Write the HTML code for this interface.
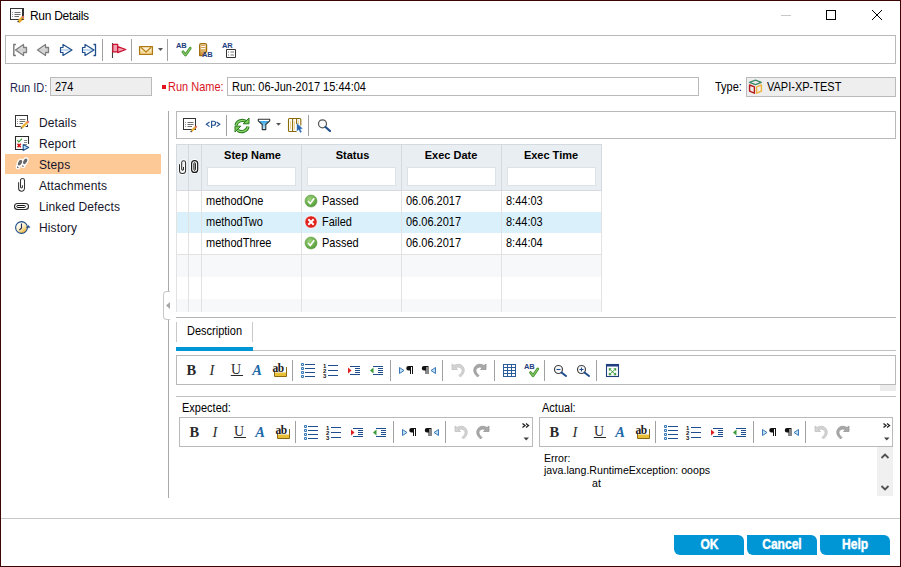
<!DOCTYPE html>
<html><head><meta charset="utf-8">
<style>
*{box-sizing:border-box;margin:0;padding:0}
html,body{width:901px;height:567px;overflow:hidden;background:#fff}
body{position:relative;font-family:"Liberation Sans",sans-serif;font-size:11px;color:#000}
.a{position:absolute}
.t{position:absolute;white-space:pre;line-height:11px;font-size:11px;transform:scaleY(1.12);transform-origin:0 9px}
.t12{position:absolute;white-space:pre;line-height:12px;font-size:12px;letter-spacing:0.12px}
.box{position:absolute;border:1px solid #b9b9b9}
.sep{position:absolute;width:1px;background:#a0a0a0}
svg{position:absolute;overflow:visible}
.btn{width:70px;height:20px;background:#0096d6;color:#fff;font-weight:bold;font-size:14px;line-height:19px;text-align:center;border-radius:0 6px 0 6px;-webkit-text-stroke:0.4px #fff}
.btn span{display:inline-block;transform:scaleX(0.86)}
</style></head><body>
<!-- window border -->
<div class="a" style="left:0;top:0;width:901px;height:567px;border:1px solid #3c0505"></div>

<!-- title bar -->
<svg style="left:10px;top:8px" width="15" height="15" viewBox="0 0 15 15">
  <rect x="0.5" y="0.5" width="13" height="11" fill="#fff" stroke="#333"/>
  <rect x="2" y="3" width="1" height="1" fill="#555"/><rect x="4" y="3" width="7" height="1" fill="#555"/>
  <rect x="2" y="5" width="1" height="1" fill="#555"/><rect x="4" y="5" width="7" height="1" fill="#555"/>
  <rect x="2" y="7" width="1" height="1" fill="#555"/><rect x="4" y="7" width="5" height="1" fill="#555"/>
  <path d="M8 14 L13 9 L14.5 10.5 L9.5 15 Z" fill="#e8a420"/>
</svg>
<div class="t12" style="left:30px;top:10px;letter-spacing:-0.3px;color:#000">Run Details</div>
<div class="a" style="left:781px;top:15px;width:10px;height:1px;background:#c8c8c8"></div>
<div class="a" style="left:826px;top:10px;width:10px;height:10px;border:1px solid #000"></div>
<svg style="left:872px;top:10px" width="10" height="10" viewBox="0 0 10 10"><path d="M0 0 L10 10 M10 0 L0 10" stroke="#000" stroke-width="1"/></svg>

<!-- main toolbar -->
<div class="box" style="left:5px;top:35px;width:891px;height:29px"></div>
<div class="sep" style="left:102px;top:39px;height:22px"></div>
<div class="sep" style="left:131px;top:39px;height:22px"></div>
<div class="sep" style="left:167px;top:39px;height:22px"></div>

<!-- Run ID row -->
<div class="t" style="left:10px;top:83px;color:#25254f">Run ID:</div>
<div class="a" style="left:50px;top:77px;width:102px;height:19px;background:#eeeeee;border:1px solid #bababa"></div>
<div class="t" style="left:55px;top:82px">274</div>
<div class="a" style="left:162px;top:85px;width:4px;height:4px;background:#e0141e"></div>
<div class="t" style="left:168px;top:82px;color:#d7141e">Run Name:</div>
<div class="a" style="left:227px;top:77px;width:472px;height:19px;background:#fff;border:1px solid #bababa"></div>
<div class="t" style="left:232px;top:82px">Run: 06-Jun-2017 15:44:04</div>
<div class="t" style="left:715px;top:82px;color:#000">Type:</div>
<div class="a" style="left:746px;top:77px;width:150px;height:20px;background:#eeeeee;border:1px solid #bababa"></div>
<div class="t" style="left:767px;top:82px">VAPI-XP-TEST</div>

<!-- left nav -->
<div class="a" style="left:5px;top:154px;width:156px;height:20px;background:#fdc997"></div>
<div class="t12" style="left:39px;top:117px;color:#15152a">Details</div>
<div class="t12" style="left:39px;top:138px;color:#15152a">Report</div>
<div class="t12" style="left:39px;top:159px;color:#15152a">Steps</div>
<div class="t12" style="left:39px;top:180px;color:#15152a">Attachments</div>
<div class="t12" style="left:39px;top:201px;color:#15152a">Linked Defects</div>
<div class="t12" style="left:39px;top:222px;color:#15152a">History</div>

<!-- vertical splitter -->
<div class="a" style="left:168px;top:111px;width:1px;height:387px;background:#a8a8a8"></div>

<!-- inner toolbar -->
<div class="box" style="left:176px;top:111px;width:720px;height:28px"></div>
<div class="sep" style="left:226px;top:115px;height:21px"></div>
<div class="sep" style="left:308px;top:115px;height:21px"></div>


<!-- grid -->
<div class="a" style="left:176px;top:144px;width:426px;height:168px;background:#fff;border-left:1px solid #e2e2e2;border-top:1px solid #d4dae0;border-right:1px solid #e2e2e2"></div>
<div class="a" style="left:176px;top:144px;width:1px;height:47px;background:#d4dae0"></div>
<div class="a" style="left:601px;top:144px;width:1px;height:47px;background:#d4dae0"></div>
<div class="a" style="left:177px;top:145px;width:424px;height:45px;background:#e9eef2"></div>
<div class="a" style="left:176px;top:190px;width:426px;height:1px;background:#d4dae0"></div>
<div class="a" style="left:177px;top:212px;width:424px;height:21px;background:#daf1fc"></div>
<div class="a" style="left:176px;top:254px;width:426px;height:1px;background:#e2e2e2"></div>
<div class="a" style="left:177px;top:255px;width:424px;height:22px;background:#f6f8fa"></div>
<div class="a" style="left:177px;top:299px;width:424px;height:13px;background:#f6f8fa"></div>
<!-- col lines header -->
<div class="a" style="left:188px;top:145px;width:1px;height:45px;background:#d4dae0"></div>
<div class="a" style="left:201px;top:145px;width:1px;height:45px;background:#d4dae0"></div>
<div class="a" style="left:301px;top:145px;width:1px;height:45px;background:#d4dae0"></div>
<div class="a" style="left:401px;top:145px;width:1px;height:45px;background:#d4dae0"></div>
<div class="a" style="left:501px;top:145px;width:1px;height:45px;background:#d4dae0"></div>
<!-- col lines body -->
<div class="a" style="left:188px;top:191px;width:1px;height:121px;background:#e2e2e2"></div>
<div class="a" style="left:201px;top:191px;width:1px;height:121px;background:#e2e2e2"></div>
<div class="a" style="left:301px;top:191px;width:1px;height:121px;background:#e2e2e2"></div>
<div class="a" style="left:401px;top:191px;width:1px;height:121px;background:#e2e2e2"></div>
<div class="a" style="left:501px;top:191px;width:1px;height:121px;background:#e2e2e2"></div>
<!-- filter boxes -->
<div class="a" style="left:207px;top:167px;width:89px;height:19px;background:#fff;border:1px solid #dde2e7"></div>
<div class="a" style="left:307px;top:167px;width:89px;height:19px;background:#fff;border:1px solid #dde2e7"></div>
<div class="a" style="left:407px;top:167px;width:89px;height:19px;background:#fff;border:1px solid #dde2e7"></div>
<div class="a" style="left:507px;top:167px;width:89px;height:19px;background:#fff;border:1px solid #dde2e7"></div>
<!-- header text -->
<div class="t" style="left:202.5px;width:100px;text-align:center;top:150px;font-weight:bold;transform:none">Step Name</div>
<div class="t" style="left:302.5px;width:100px;text-align:center;top:150px;font-weight:bold;transform:none">Status</div>
<div class="t" style="left:401px;width:100px;text-align:center;top:150px;font-weight:bold;transform:none">Exec Date</div>
<div class="t" style="left:501px;width:100px;text-align:center;top:150px;font-weight:bold;transform:none">Exec Time</div>
<!-- rows -->
<div class="t" style="left:206px;top:196px">methodOne</div>
<div class="t" style="left:322px;top:196px">Passed</div>
<div class="t" style="left:406px;top:196px">06.06.2017</div>
<div class="t" style="left:506px;top:196px">8:44:03</div>
<div class="t" style="left:206px;top:217px">methodTwo</div>
<div class="t" style="left:322px;top:217px">Failed</div>
<div class="t" style="left:406px;top:217px">06.06.2017</div>
<div class="t" style="left:506px;top:217px">8:44:03</div>
<div class="t" style="left:206px;top:238px">methodThree</div>
<div class="t" style="left:322px;top:238px">Passed</div>
<div class="t" style="left:406px;top:238px">06.06.2017</div>
<div class="t" style="left:506px;top:238px">8:44:04</div>



<!-- horizontal splitter -->
<div class="a" style="left:176px;top:317px;width:720px;height:1px;background:#b4b4b4"></div>
<!-- collapse handle -->
<div class="a" style="left:163px;top:291px;width:7px;height:29px;border:1px solid #c8c8c8;border-right:none;border-radius:4px 0 0 4px;background:#fff"></div>
<svg style="left:166px;top:302px" width="5" height="7"><path d="M0 3.5 L4 0 L4 7 Z" fill="#a8a8a8"/></svg>
<!-- description tab -->
<div class="a" style="left:176px;top:322px;width:1px;height:20px;background:#c8c8c8"></div>
<div class="a" style="left:252px;top:322px;width:1px;height:20px;background:#c8c8c8"></div>
<div class="t" style="left:187px;top:326px">Description</div>
<div class="a" style="left:176px;top:347px;width:77px;height:4px;background:#0096d6"></div>
<div class="a" style="left:253px;top:350px;width:643px;height:1px;background:#c0c0c0"></div>
<!-- description toolbar -->
<div class="box" style="left:176px;top:355px;width:720px;height:30px"></div>
<div class="a" style="left:880px;top:385px;width:16px;height:6px;background:#ececec"></div>
<div class="a" style="left:176px;top:396px;width:720px;height:1px;background:#c0c0c0"></div>
<div class="sep" style="left:292px;top:360px;height:21px"></div>
<div class="sep" style="left:390px;top:360px;height:21px"></div>
<div class="sep" style="left:442px;top:360px;height:21px"></div>
<div class="sep" style="left:494px;top:360px;height:21px"></div>
<div class="sep" style="left:544px;top:360px;height:21px"></div>
<div class="sep" style="left:596px;top:360px;height:21px"></div>
<!-- expected / actual -->
<div class="t" style="left:182px;top:403px">Expected:</div>
<div class="t" style="left:542px;top:403px">Actual:</div>
<div class="box" style="left:179px;top:417px;width:354px;height:30px"></div>
<div class="box" style="left:539px;top:417px;width:354px;height:30px"></div>
<div class="sep" style="left:295px;top:421px;height:22px"></div>
<div class="sep" style="left:393px;top:421px;height:22px"></div>
<div class="sep" style="left:445px;top:421px;height:22px"></div>
<div class="sep" style="left:655px;top:421px;height:22px"></div>
<div class="sep" style="left:753px;top:421px;height:22px"></div>
<div class="sep" style="left:805px;top:421px;height:22px"></div>
<div class="t" style="left:544px;top:453px;font-size:10.6px;transform:none">Error:</div>
<div class="t" style="left:544px;top:465px;font-size:10.6px;transform:none">java.lang.RuntimeException: ooops</div>
<div class="t" style="left:592px;top:478px;font-size:10.6px;transform:none">at</div>
<div class="a" style="left:877px;top:447px;width:16px;height:49px;background:#f0f0f0"></div>
<!-- buttons -->
<div class="btn a" style="left:674px;top:535px"><span>OK</span></div>
<div class="btn a" style="left:747px;top:535px"><span>Cancel</span></div>
<div class="btn a" style="left:820px;top:535px"><span>Help</span></div>
<!-- bottom -->
<div class="a" style="left:1px;top:518px;width:899px;height:1px;background:#c8c8c8"></div>

<!-- ICONS overlay -->
<svg style="left:0;top:0" width="901" height="567" viewBox="0 0 901 567">
<defs>
<linearGradient id="gg" x1="0" y1="0" x2="0" y2="1"><stop offset="0" stop-color="#f2f2f2"/><stop offset="0.5" stop-color="#cfcfcf"/><stop offset="1" stop-color="#ededed"/></linearGradient>
<linearGradient id="bg" x1="0" y1="0" x2="0" y2="1"><stop offset="0" stop-color="#ffffff"/><stop offset="0.35" stop-color="#ffffff"/><stop offset="0.5" stop-color="#a8cce8"/><stop offset="0.65" stop-color="#ffffff"/><stop offset="1" stop-color="#ffffff"/></linearGradient>
<linearGradient id="fun" x1="0" y1="0" x2="0" y2="1"><stop offset="0" stop-color="#ffffff"/><stop offset="0.16" stop-color="#ffffff"/><stop offset="0.2" stop-color="#3aa8e8"/><stop offset="1" stop-color="#c8ecfc"/></linearGradient>
<radialGradient id="grn" cx="0.4" cy="0.35" r="0.7"><stop offset="0" stop-color="#9fd27a"/><stop offset="1" stop-color="#4f9a35"/></radialGradient>
<g id="docico">
 <rect x="0.5" y="0.5" width="12" height="11" fill="#fff" stroke="#333" stroke-width="1"/>
 <path d="M2 4.5 H3 M2 6.5 H3 M2 8.5 H3" stroke="#999" stroke-width="1"/>
 <path d="M4.5 4.5 H10.5 M4.5 6.5 H10.5 M4.5 8.5 H9" stroke="#707070" stroke-width="1"/>
 <path d="M8.6 13 L12.8 8.8" stroke="#f0b030" stroke-width="2.2" stroke-linecap="butt"/>
 <path d="M12.4 8.4 L13.6 9.6" stroke="#e07070" stroke-width="2.2"/>
 <path d="M7.6 14 L8.6 13" stroke="#444" stroke-width="1.4"/>
</g>
<g id="ed">
 <text x="186.5" y="374.6" font-family="Liberation Serif" font-weight="bold" font-size="14.5" fill="#2a2a2a">B</text>
 <text x="209.5" y="374.6" font-family="Liberation Serif" font-style="italic" font-size="14.5" fill="#2a2a2a">I</text>
 <text x="231" y="373.5" font-family="Liberation Serif" font-size="14" fill="#2a2a2a">U</text>
 <path d="M230.8 375.5 H243" stroke="#2a2a2a" stroke-width="1"/>
 <text x="252.3" y="374.6" font-family="Liberation Serif" font-weight="bold" font-style="italic" font-size="14.5" fill="#1f6aa8">A</text>
 <rect x="275" y="372.5" width="11.5" height="4" fill="#e8c038"/>
 <path d="M274.5 372 V376.5 H286.5 V367" fill="none" stroke="#8a6a10" stroke-width="1"/>
 <text x="272.6" y="371.8" font-family="Liberation Serif" font-weight="bold" font-size="11.5" fill="#1a1a1a" letter-spacing="-0.5">ab</text>
 <!-- bullets -->
 <path d="M301.5 363.5 h2 v2 h-2 Z M301.5 367.5 h2 v2 h-2 Z M301.5 371.5 h2 v2 h-2 Z M301.5 375.5 h2 v2 h-2 Z" fill="#d8e8f8" stroke="#3a78b8" stroke-width="1"/>
 <path d="M305 364.5 H315 M305 368.5 H315 M305 372.5 H315 M305 376.5 H315" stroke="#1f4e8c" stroke-width="1"/>
 <!-- numbers -->
 <text x="323" y="367.5" font-family="Liberation Sans" font-weight="bold" font-size="6" fill="#111">1</text>
 <text x="323" y="372.5" font-family="Liberation Sans" font-weight="bold" font-size="6" fill="#111">2</text>
 <text x="323" y="377.8" font-family="Liberation Sans" font-weight="bold" font-size="6" fill="#111">3</text>
 <path d="M328 365.5 H338 M328 370.5 H338 M328 375.5 H338" stroke="#1f4e8c" stroke-width="1"/>
 <!-- outdent -->
 <path d="M348 367.5 L351.5 370.5 L348 373.5 Z" fill="#e02020"/>
 <path d="M350 366.5 H360 M350 374.5 H360 M355 368.5 H360 M355 370.5 H360 M355 372.5 H360" stroke="#1f4e8c" stroke-width="1"/>
 <!-- indent -->
 <path d="M373.5 367.5 L370 370.5 L373.5 373.5 Z" fill="#3a9a3a"/>
 <path d="M373 366.5 H383 M373 374.5 H383 M378 368.5 H383 M378 370.5 H383 M378 372.5 H383" stroke="#1f4e8c" stroke-width="1"/>
 <!-- ltr / rtl -->
 <path d="M399.5 367.5 L404 370.5 L399.5 373.5 Z" fill="#bfe0f5" stroke="#3a78b8" stroke-width="1"/>
 <path d="M408.5 366 H413 V374 H412 V367 H411 V374 H410 V370.5 H408.5 A2.25 2.25 0 0 1 408.5 366 Z" fill="#111"/>
 <path d="M424 366 H428.5 V374 H427.5 V367 H426.5 V374 H425.5 V370.5 H424 A2.25 2.25 0 0 1 424 366 Z" fill="#111"/>
 <path d="M435.5 367.5 L431 370.5 L435.5 373.5 Z" fill="#bfe0f5" stroke="#3a78b8" stroke-width="1"/>
 <!-- undo / redo -->
 <path d="M452 364 L452 369.5 L457.5 369.5 L455.5 367.5 Q459 366 461.5 368.5 Q463.5 371.5 459 375.5 L460.5 377 Q466.5 371.5 463 366.5 Q459.5 362.5 454 365.5 Z" fill="#d4d4d4" stroke="#c0c0c0" stroke-width="0.8"/>
 <path d="M486 364 L486 369.5 L480.5 369.5 L482.5 367.5 Q479 366 476.5 368.5 Q474.5 371.5 479 375.5 L477.5 377 Q471.5 371.5 475 366.5 Q478.5 362.5 484 365.5 Z" fill="#a8a8a8" stroke="#989898" stroke-width="0.8"/>
</g>
</defs>
<use href="#docico" x="10" y="8"/>
<g id="tb1" stroke-linejoin="round">
 <path d="M15.8 44.5 H13.8 V55.5 H15.8" fill="none" stroke="#6e6e6e" stroke-width="1.3" stroke-linejoin="round"/>
 <path d="M15.5 50 L23.5 44.5 V47.5 H26.5 V52.5 H23.5 V55.5 Z" fill="url(#gg)" stroke="#7e7e7e" stroke-width="1.3"/>
 <path d="M37.5 50 L45.5 44.5 V47.5 H48.5 V52.5 H45.5 V55.5 Z" fill="url(#gg)" stroke="#7e7e7e" stroke-width="1.3"/>
 <path d="M72 50 L63 44.5 V47.5 H60.5 V52.5 H63 V55.5 Z" fill="url(#bg)" stroke="#1f4e8c" stroke-width="1.2"/>
 <path d="M94 50 L85 44.5 V47.5 H82.5 V52.5 H85 V55.5 Z" fill="url(#bg)" stroke="#1f4e8c" stroke-width="1.2"/>
 <path d="M93.5 44.5 H95.5 V55.5 H93.5" fill="none" stroke="#1f4e8c" stroke-width="1.3"/>
 <path d="M112.5 43 V58" stroke="#444" stroke-width="1.1"/>
 <rect x="112.8" y="44.3" width="4.9" height="7.6" fill="#f0a0b0" stroke="#c8102e" stroke-width="1.2"/><path d="M117.7 46.6 L125.8 49.5 L117.7 52.6 Z" fill="#f0a0b0" stroke="#c8102e" stroke-width="1.2" stroke-linejoin="round"/>
 <defs><linearGradient id="env" x1="0" y1="0" x2="0" y2="1"><stop offset="0" stop-color="#fffbea"/><stop offset="1" stop-color="#fbd890"/></linearGradient></defs><rect x="139.6" y="46.6" width="12.8" height="7.8" fill="url(#env)" stroke="#b07810" stroke-width="1.3"/>
 <path d="M140.8 47.3 L146 52 L151.2 47.3" fill="none" stroke="#b88018" stroke-width="1.2"/><path d="M140.5 54 L143.5 50.8 M151.5 54 L148.5 50.8" fill="none" stroke="#e8c070" stroke-width="0.8"/>
 <path d="M158 48 H163 L160.5 51 Z" fill="#555"/>
 <text x="176" y="48.3" font-family="Liberation Sans" font-weight="bold" font-size="7.5" fill="#1f3f7f" letter-spacing="-0.2">AB</text>
 <path d="M183 51.8 L185.5 55 L190.2 48.2" fill="none" stroke="#3f8f2a" stroke-width="2.8" stroke-linecap="round" stroke-linejoin="round"/><path d="M183 51.8 L185.5 55 L190.2 48.2" fill="none" stroke="#8fd070" stroke-width="1.1" stroke-linecap="round"/>
 <defs><linearGradient id="dg" x1="0" y1="0" x2="0" y2="1"><stop offset="0" stop-color="#f8e8c0"/><stop offset="1" stop-color="#c88a28"/></linearGradient></defs><path d="M199.6 45 Q199.6 43.6 201.2 43.6 H205 Q206.6 43.6 206.6 45 V51.5 L202.5 55.6 H199.6 Z" fill="url(#dg)" stroke="#a06c10" stroke-width="1.2"/>
 <path d="M201.2 46.5 H205 M201.2 48.5 H205" stroke="#fff" stroke-width="1"/><path d="M201.2 45.5 H205 M201.2 47.5 H205" stroke="#d89040" stroke-width="0.8"/>
 <text x="202" y="56.8" font-family="Liberation Sans" font-weight="bold" font-size="7.5" fill="#1f3f7f" letter-spacing="-0.2">AB</text>
 <text x="222" y="47.8" font-family="Liberation Sans" font-weight="bold" font-size="7.5" fill="#1f3f7f" letter-spacing="-0.2">AR</text>
 <rect x="226.5" y="49.5" width="9" height="8" fill="#fff" stroke="#333" stroke-width="1"/>
 <path d="M228 52 H229 M230.5 52 H234 M228 55 H229 M230.5 55 H234" stroke="#777" stroke-width="1"/>
</g>
<!-- type cube -->
<g fill="none" stroke-width="1.4" stroke-linejoin="round">
 <path d="M749.5 82.3 L755.5 80.2 L761.3 82.3 L755.5 84.6 Z" stroke="#3d8a6a"/>
 <path d="M749.6 85 L754.4 86.8 V93.2 L749.6 91.2 Z" stroke="#b81a1a"/>
 <path d="M756.6 86.8 L761.4 85 V91.2 L756.6 93.2 Z" stroke="#f0b43c"/>
</g>
<!-- nav icons -->
<g>
 <rect x="15.5" y="115.5" width="12" height="11" fill="#fff" stroke="#333" stroke-width="1"/>
 <path d="M17 119.5 H18 M17 121.5 H18 M17 123.5 H18" stroke="#999" stroke-width="1"/>
 <path d="M19.5 119.5 H25.5 M19.5 121.5 H25.5 M19.5 123.5 H23" stroke="#707070" stroke-width="1"/>
 <path d="M21.8 127.6 L28 121.6" stroke="#fff" stroke-width="3.6"/>
 <path d="M21.8 127.6 L27.6 122" stroke="#f0b030" stroke-width="2.2"/>
 <path d="M27.3 121.3 L28.7 122.7" stroke="#e07070" stroke-width="2.2"/>
 <path d="M20.8 128.6 L21.9 127.5" stroke="#444" stroke-width="1.4"/>
</g>
<g>
 <path d="M23 149.5 H15.5 V136.5 H28.5 V144" fill="#fff" stroke="#2a2a2a" stroke-width="1.1"/>
 <path d="M17.3 140.2 L18.8 141.8 L22 138.6" fill="none" stroke="#3a9a30" stroke-width="1.2"/>
 <path d="M17.5 143.7 L20.8 147.3 M20.8 143.7 L17.5 147.3" stroke="#d01010" stroke-width="1.5"/>
 <path d="M24 140.5 H27 M24 142.5 H27 M24 144.5 H27" stroke="#8a8a8a" stroke-width="1"/>
 <path d="M23.2 144.6 L28.6 147.5 L23.2 150.4 Z" fill="#b8e4fa" stroke="#1f4e8c" stroke-width="1.1" stroke-linejoin="round"/>
</g>
<g fill="#fff" stroke="#fff" stroke-width="2.2">
 <ellipse cx="20" cy="162.7" rx="1.9" ry="3.2" transform="rotate(28 20 162.7)"/>
 <ellipse cx="25.2" cy="161.3" rx="1.9" ry="3.2" transform="rotate(28 25.2 161.3)"/>
 <circle cx="18" cy="167" r="1.3"/><circle cx="23.2" cy="165.7" r="1.3"/>
</g>
<g fill="#666">
 <ellipse cx="20" cy="162.7" rx="1.7" ry="3" transform="rotate(28 20 162.7)"/>
 <ellipse cx="25.2" cy="161.3" rx="1.7" ry="3" transform="rotate(28 25.2 161.3)"/>
 <path d="M17 166 L19 167.8 L17.2 168.3 Z M22.2 164.8 L24.2 166.6 L22.4 167.1 Z"/>
</g>
<path d="M18.6 182.2 V188.3 A2.95 2.95 0 0 0 24.5 188.3 V180.5 A2 2 0 0 0 20.5 180.5 V187 A0.95 0.95 0 0 0 22.4 187 V185.2" fill="none" stroke="#333" stroke-width="1.05"/>
<rect x="14.5" y="203.5" width="14" height="6" rx="3" fill="none" stroke="#2a2a2a" stroke-width="1.1"/>
<rect x="16.8" y="205.5" width="8.6" height="2" rx="1" fill="#fff" stroke="#111" stroke-width="1"/>
<defs><linearGradient id="hy" x1="0.2" y1="0.1" x2="0.8" y2="0.9"><stop offset="0" stop-color="#ffffff"/><stop offset="0.5" stop-color="#fff0c8"/><stop offset="1" stop-color="#eab030"/></linearGradient></defs>
<g>
 <circle cx="21.5" cy="227.5" r="5.9" fill="url(#hy)" stroke="#1f4e8c" stroke-width="1.1"/>
 <path d="M21.5 223.5 V228 L19.3 230.2" fill="none" stroke="#1f3060" stroke-width="1.1"/>
 <path d="M26.6 227.6 L28.4 225.4 L30 227.6 Z" fill="#1f4e8c" stroke="#1f4e8c" stroke-width="0.5"/>
</g>
<!-- inner toolbar -->
<use href="#docico" x="183" y="118"/>
<g fill="none" stroke="#1f4f8f" stroke-width="1.1" stroke-linejoin="miter">
 <path d="M209.5 122 L206.3 124.3 L209.5 126.6"/>
 <path d="M211.6 128 V121.3 H213.6 Q215.6 121.3 215.6 123.3 Q215.6 125.3 213.6 125.3 H211.6"/>
 <path d="M216.6 122 L219.8 124.3 L216.6 126.6"/>
</g>
<g fill="none" stroke-linecap="butt">
 <path d="M236 125.5 A6.3 6 0 0 1 246.3 121.8" stroke="#2a7a20" stroke-width="3.2"/>
 <path d="M236 125.5 A6.3 6 0 0 1 246.3 121.8" stroke="#8ad868" stroke-width="1.3"/>
 <path d="M248 126.5 A6.3 6 0 0 1 237.7 130.2" stroke="#2a7a20" stroke-width="3.2"/>
 <path d="M248 126.5 A6.3 6 0 0 1 237.7 130.2" stroke="#8ad868" stroke-width="1.3"/>
</g>
<path d="M243.2 123.8 L249 123.8 L249 118 Z" fill="#7acc58" stroke="#2a7a20" stroke-width="1" stroke-linejoin="round"/>
<path d="M240.8 126.2 L235 126.2 L235 132 Z" fill="#7acc58" stroke="#2a7a20" stroke-width="1" stroke-linejoin="round"/>
<path d="M258.3 119.2 H269.7 V120.8 L265.8 124.5 V129.6 H262.2 V124.5 L258.3 120.8 Z" fill="url(#fun)" stroke="#333" stroke-width="1.1" stroke-linejoin="round"/>
<path d="M276 123 H281 L278.5 125.8 Z" fill="#555"/>
<path d="M296.6 131.5 H289.5 Q288.5 131.5 288.5 130.5 V119.5 Q288.5 118.5 289.5 118.5 H299.8 Q300.8 118.5 300.8 119.5 V125.5 M292.6 118.5 V131.5 M296.6 118.5 V124" fill="none" stroke="#8a6a08" stroke-width="1.1"/>
<path d="M290.6 121 V129.5 M294.6 121 V129.5 M298.6 120.5 V124" stroke="#e8c050" stroke-width="0.7"/>
<path d="M297 123.5 L297 131 L298.8 129.4 L300.3 132.5 L301.5 131.9 L300.1 128.9 L302.4 128.6 Z" fill="#2a64a8" stroke="#4a88c8" stroke-width="0.5"/>
<circle cx="322.5" cy="123.8" r="4" fill="#fafafa" stroke="#555" stroke-width="1.2"/>
<path d="M325.5 127 L330 131" stroke="#1f4e8c" stroke-width="2.2" stroke-linecap="round"/>
<!-- grid clips -->
<path d="M179.5 164.2 V170.4 A3.05 3.05 0 0 0 185.6 170.4 V162.7 A1.95 1.95 0 0 0 181.7 162.7 V169.2 A0.9 0.9 0 0 0 183.5 169.2 V166.9" fill="none" stroke="#fff" stroke-width="3"/>
<path d="M179.5 164.2 V170.4 A3.05 3.05 0 0 0 185.6 170.4 V162.7 A1.95 1.95 0 0 0 181.7 162.7 V169.2 A0.9 0.9 0 0 0 183.5 169.2 V166.9" fill="none" stroke="#2a2a2a" stroke-width="1.05"/>
<rect x="191.6" y="160.6" width="6.1" height="11.8" rx="3" fill="#fff" stroke="#fff" stroke-width="3"/>
<rect x="191.6" y="160.6" width="6.1" height="11.8" rx="3" fill="none" stroke="#1a1a1a" stroke-width="1.2"/>
<rect x="193.9" y="162.7" width="1.5" height="7.6" rx="0.75" fill="#fff" stroke="#111" stroke-width="1"/>
<!-- status icons -->
<g>
 <circle cx="311" cy="201" r="6" fill="url(#grn)" stroke="#5a9a40" stroke-width="0.6"/>
 <path d="M308 201 L310.3 203.5 L314.2 198.3" fill="none" stroke="#fff" stroke-width="1.6"/>
 <circle cx="311" cy="243" r="6" fill="url(#grn)" stroke="#5a9a40" stroke-width="0.6"/>
 <path d="M308 243 L310.3 245.5 L314.2 240.3" fill="none" stroke="#fff" stroke-width="1.6"/>
 <circle cx="311" cy="222" r="6.3" fill="#e0201c" stroke="#fff" stroke-width="1"/>
 <path d="M308.3 219.3 L313.7 224.7 M313.7 219.3 L308.3 224.7" stroke="#fff" stroke-width="2"/>
</g>
<!-- editor toolbars -->
<use href="#ed"/>
<use href="#ed" x="3" y="62"/>
<use href="#ed" x="363" y="62"/>
<!-- desc toolbar extra -->
<g fill="none" stroke="#2a5c9a" stroke-width="1">
 <rect x="503.5" y="364.5" width="12" height="12" fill="#fff"/>
 <path d="M507.5 364.5 V376.5 M511.5 364.5 V376.5 M503.5 367.5 H515.5 M503.5 370.5 H515.5 M503.5 373.5 H515.5"/>
</g>
<text x="524" y="368.8" font-family="Liberation Sans" font-weight="bold" font-size="7.5" fill="#1f3f7f" letter-spacing="-0.2">AB</text>
<path d="M530.5 372.5 L533 375.7 L537.7 369" fill="none" stroke="#3f8f2a" stroke-width="2.8" stroke-linecap="round" stroke-linejoin="round"/><path d="M530.5 372.5 L533 375.7 L537.7 369" fill="none" stroke="#8fd070" stroke-width="1.1" stroke-linecap="round"/>
<circle cx="558.5" cy="369.5" r="4" fill="#fafafa" stroke="#444" stroke-width="1.2"/>
<path d="M556.5 369.5 H560.5" stroke="#1f4e8c" stroke-width="1.1"/>
<path d="M561.5 372.5 L566 376" stroke="#1f4e8c" stroke-width="2" stroke-linecap="round"/>
<circle cx="581.5" cy="369.5" r="4" fill="#fafafa" stroke="#444" stroke-width="1.2"/>
<path d="M579.5 369.5 H583.5 M581.5 367.5 V371.5" stroke="#1f4e8c" stroke-width="1.1"/>
<path d="M584.5 372.5 L589 376" stroke="#1f4e8c" stroke-width="2" stroke-linecap="round"/>
<rect x="606.5" y="364.5" width="12" height="12" fill="#fff" stroke="#1f3f7f" stroke-width="1.1"/>
<rect x="606" y="364" width="13" height="2.5" fill="#1f3f7f"/>
<path d="M609 368.5 L616 375 M616 368.5 L609 375" stroke="#3a9a3a" stroke-width="1"/>
<path d="M608.8 368.3 h2.5 v1 h-1.5 v1.5 h-1 Z M616.2 368.3 h-2.5 v1 h1.5 v1.5 h1 Z M608.8 375.2 h2.5 v-1 h-1.5 v-1.5 h-1 Z M616.2 375.2 h-2.5 v-1 h1.5 v-1.5 h1 Z" fill="#3a9a3a"/>
<!-- expected/actual >> and dropdown -->
<g fill="none" stroke="#222" stroke-width="1.3">
 <path d="M522.5 423.5 L525 425.5 L522.5 427.5 M526 423.5 L528.5 425.5 L526 427.5"/>
 <path d="M883.5 423.5 L886 425.5 L883.5 427.5 M887 423.5 L889.5 425.5 L887 427.5"/>
</g>
<path d="M523.5 437.5 H529 L526.25 440.5 Z M884 437.5 H889.5 L886.75 440.5 Z" fill="#444"/>
<!-- scrollbar arrows -->
<path d="M881.5 458 L885 454.5 L888.5 458 M881.5 486 L885 489.5 L888.5 486" fill="none" stroke="#505050" stroke-width="1.8"/>
</svg>
</body></html>
